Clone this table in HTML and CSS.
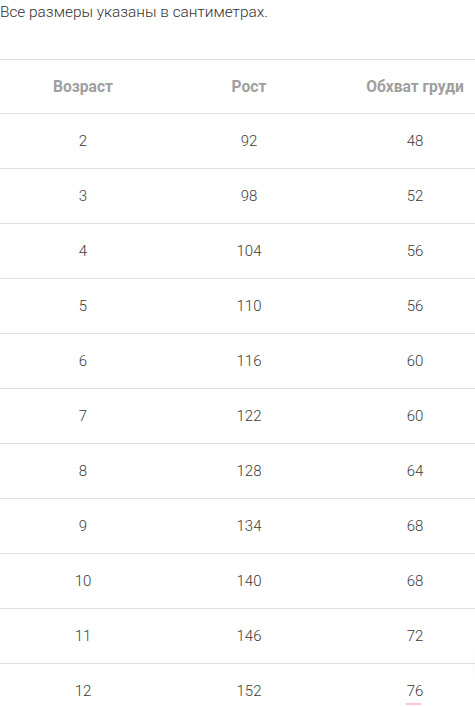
FILE: index.html
```html
<!DOCTYPE html>
<html lang="ru">
<head>
<meta charset="utf-8">
<title>Таблица размеров</title>
<link rel="stylesheet" href="styles.css">
</head>
<body>
<div class="page">
  <p class="note">Все размеры указаны в сантиметрах.</p>
  <div class="table-wrap">
    <table class="sizes">
      <thead>
        <tr><th>Возраст</th><th>Рост</th><th>Обхват груди</th></tr>
      </thead>
      <tbody>
        <tr><td>2</td><td>92</td><td>48</td></tr>
        <tr><td>3</td><td>98</td><td>52</td></tr>
        <tr><td>4</td><td>104</td><td>56</td></tr>
        <tr><td>5</td><td>110</td><td>56</td></tr>
        <tr><td>6</td><td>116</td><td>60</td></tr>
        <tr><td>7</td><td>122</td><td>60</td></tr>
        <tr><td>8</td><td>128</td><td>64</td></tr>
        <tr><td>9</td><td>134</td><td>68</td></tr>
        <tr><td>10</td><td>140</td><td>68</td></tr>
        <tr><td>11</td><td>146</td><td>72</td></tr>
        <tr><td>12</td><td>152</td><td><span class="mark">76</span></td></tr>
      </tbody>
    </table>
  </div>
  <div class="fab-shadow"></div>
</div>
</body>
</html>
```
FILE: styles.css
```css
html, body {
  margin: 0;
  padding: 0;
  background: #fff;
  overflow: hidden;
}
.page {
  width: 475px;
  height: 707px;
  overflow: hidden;
  position: relative;
  font-family: Roboto, "Noto Sans", sans-serif;
}
.note {
  margin: 0;
  height: 59px;
  padding-top: 2px;
  box-sizing: border-box;
  font-size: 15.4px;
  font-weight: 300;
  line-height: 20px;
  color: #333;
}
.table-wrap {
  width: 475px;
  overflow: hidden;
}
.sizes {
  width: 498px;
  border-collapse: collapse;
  table-layout: fixed;
}
.sizes th,
.sizes td {
  width: 166px;
  height: 54px;
  padding: 0;
  text-align: center;
  vertical-align: middle;
  font-size: 15px;
  border-top: 1px solid #e0e0e0;
}
.sizes th {
  height: 53px;
  font-size: 15.6px;
  font-weight: 700;
  color: #9e9e9e;
}
.sizes td {
  font-weight: 300;
  color: #3a3a3a;
}
.mark {
  position: relative;
  display: inline-block;
}
.mark::after {
  content: "";
  position: absolute;
  left: -1px;
  right: 2px;
  bottom: -5px;
  height: 2px;
  background: #f8c6d8;
}
.fab-shadow {
  position: absolute;
  left: 482px;
  top: 640px;
  width: 56px;
  height: 56px;
  border-radius: 50%;
  background: #fff;
  box-shadow: 0 0 14px rgba(0, 0, 0, 0.12);
}
```
